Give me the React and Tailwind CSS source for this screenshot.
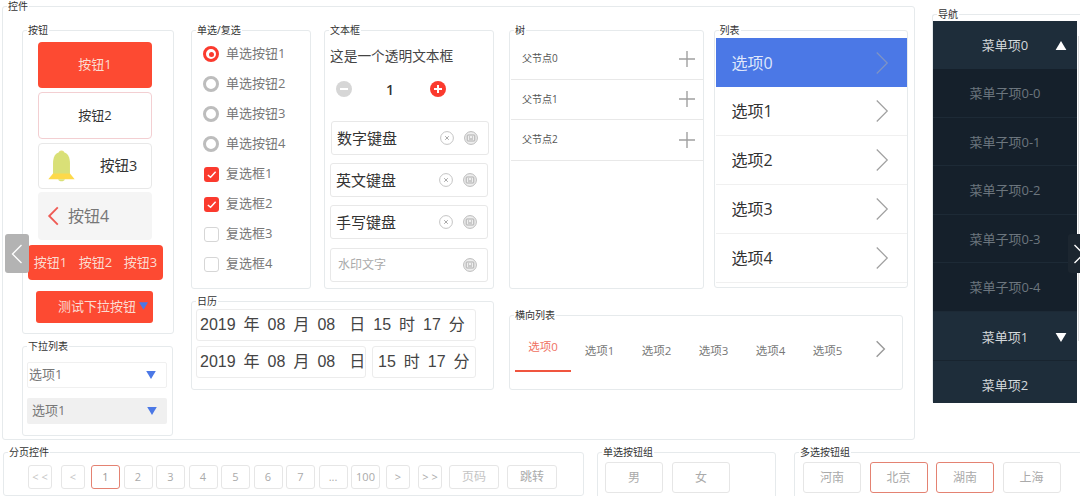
import React from "react";

const Group = ({ label, className = "", children }) => (
  <div className={`relative rounded-[3px] border border-[#e6eaec] bg-white ${className}`}>
    <span className="absolute -top-[8px] left-[4px] bg-white px-[1px] text-[10px] leading-[14px] text-[#333]">{label}</span>
    {children}
  </div>
);

const Chevron = ({ className = "", color = "#999", w = 1.6 }) => (
  <svg viewBox="0 0 16 28" className={className} fill="none">
    <path d="M2 2 L14 14 L2 26" stroke={color} strokeWidth={w} />
  </svg>
);

const Tri = ({ up, color = "#4b78e6", className = "" }) => (
  <svg viewBox="0 0 12 10" className={className}>
    <path d={up ? "M6 0 L12 10 L0 10 Z" : "M0 0 L12 0 L6 10 Z"} fill={color} />
  </svg>
);

const Radio = ({ on, children }) => (
  <div className="flex h-[30px] items-center pl-[11px]">
    {on ? (
      <span className="flex h-[16px] w-[16px] items-center justify-center rounded-full border-[3px] border-[#fb3a2e] bg-white">
        <span className="h-[5px] w-[5px] rounded-full bg-[#fb3a2e]" />
      </span>
    ) : (
      <span className="h-[16px] w-[16px] rounded-full border-[3px] border-[#bdbdbd] bg-white" />
    )}
    <span className="ml-[7px] text-[13px] text-[#777]">{children}</span>
  </div>
);

const Check = ({ on, children }) => (
  <div className="flex h-[30px] items-center pl-[12px]">
    {on ? (
      <span className="flex h-[15px] w-[15px] items-center justify-center rounded-[3px] bg-[#fb3a2e]">
        <svg viewBox="0 0 12 12" className="h-[11px] w-[11px]" fill="none">
          <path d="M2 6.5 L5 9 L10.5 3" stroke="#fff" strokeWidth="1.6" />
        </svg>
      </span>
    ) : (
      <span className="h-[15px] w-[15px] rounded-[3px] border border-[#d6d6d6] bg-white" />
    )}
    <span className="ml-[7px] text-[13px] text-[#777]">{children}</span>
  </div>
);

const KeyIcon = () => (
  <svg viewBox="0 0 14 14" className="h-[14px] w-[14px]" fill="none">
    <circle cx="7" cy="7" r="6.4" stroke="#bbb" strokeWidth="1" fill="#eeeeee" />
    <rect x="3.2" y="4" width="7.6" height="6" rx="0.6" stroke="#a6a6a6" strokeWidth="0.9" />
    <path d="M5 6h1M8 6h1M5 8h4" stroke="#a6a6a6" strokeWidth="1" />
  </svg>
);

const ClearIcon = () => (
  <svg viewBox="0 0 14 14" className="h-[14px] w-[14px]" fill="none">
    <circle cx="7" cy="7" r="6.4" stroke="#c4c4c4" strokeWidth="1" />
    <path d="M5.2 5.2 L8.8 8.8 M8.8 5.2 L5.2 8.8" stroke="#aaa" strokeWidth="1" />
  </svg>
);

const Field = ({ children, placeholder, className = "" }) => (
  <div className={`flex h-[34px] w-[158px] items-center rounded-[3px] border border-[#e8e8e8] pr-[10px] ${className}`}>
    {placeholder ? (
      <span className="ml-[7px] flex-1 text-[12px] text-[#aaa]">{placeholder}</span>
    ) : (
      <>
        <span className="ml-[5px] flex-1 text-[15px] text-[#333]">{children}</span>
        <span className="mr-[10px] flex"><ClearIcon /></span>
      </>
    )}
    <KeyIcon />
  </div>
);

const Bell = () => (
  <svg viewBox="0 0 30 34" className="h-[32px] w-[29px]">
    <circle cx="15" cy="3.5" r="3" fill="#e2e07a" />
    <path d="M15 2 C8 2 6 8 6 14 L6 26 L24 26 L24 14 C24 8 22 2 15 2 Z" fill="#d9e077" />
    <path d="M1 31 L6 25 L24 25 L29 31 Z" fill="#fdd94a" />
    <path d="M11.5 31 H18.5 C18 34 12 34 11.5 31 Z" fill="#d9e077" />
  </svg>
);

const CalSeg = ({ items }) => (
  <div className="flex items-center gap-[8px] font-['Liberation_Sans','Noto_Sans_CJK_SC',sans-serif] text-[16px] text-[#444]">
    {items.map((t, i) => (
      <span key={i} className={t === "日" ? "ml-[6px]" : ""}>{t}</span>
    ))}
  </div>
);

const Pg = ({ children, w = "w-[29px]", red, muted, className = "" }) => (
  <div
    className={`flex h-[24px] ${w} items-center justify-center rounded-[3px] border text-[11px] ${
      red ? "border-[#e48272] text-[#999]" : "border-[#e6e6e6] text-[#aaa]"
    } ${muted ? "text-[#c4c4c4]" : ""} ${className}`}
  >
    {children}
  </div>
);

const Choice = ({ children, red, className = "" }) => (
  <div
    className={`flex h-[31px] w-[58px] items-center justify-center rounded-[3px] border text-[12px] text-[#aaa] ${
      red ? "border-[#e48272]" : "border-[#e6e6e6]"
    } ${className}`}
  >
    {children}
  </div>
);

const subs = ["菜单子项0-0", "菜单子项0-1", "菜单子项0-2", "菜单子项0-3", "菜单子项0-4"];

export default function App() {
  return (
    <div className="relative h-[496px] w-[1080px] overflow-hidden bg-white font-['Open_Sans','Noto_Sans_CJK_SC',sans-serif]">
      <div className="flex h-[440px] pl-[2px] pt-[6px]">
        {/* 控件 */}
        <Group label="控件" className="flex h-[434px] w-[913px] shrink-0 pl-[19px] pt-[23px]">
          {/* column 1 */}
          <div className="flex w-[152px] flex-col">
            <Group label="按钮" className="h-[304px] w-[152px]">
              <div className="flex flex-col pl-[15px] pt-[11px]">
                <div className="flex h-[46px] w-[114px] items-center justify-center rounded-[4px] bg-[#fd4a32] text-[13px] text-[#fbdcd2]">按钮1</div>
                <div className="mt-[4px] flex h-[47px] w-[114px] items-center justify-center rounded-[4px] border border-[#f3cfd2] text-[13px] text-[#333]">按钮2</div>
                <div className="mt-[4px] flex h-[46px] w-[114px] items-center rounded-[4px] border border-[#e8e8e8] pl-[8px]">
                  <Bell />
                  <span className="ml-[24px] text-[14.5px] text-[#333]">按钮3</span>
                </div>
                <div className="mt-[3px] flex h-[48px] w-[114px] items-center rounded-[4px] bg-[#f5f5f5] pl-[9px]">
                  <Chevron className="h-[20px] w-[13px] rotate-180" color="#ef5b55" w={2.6} />
                  <span className="ml-[8px] text-[16px] text-[#777]">按钮4</span>
                </div>
              </div>
              <div className="ml-[5px] mt-[5px] flex h-[35px] w-[135px] items-center justify-around rounded-[4px] bg-[#fd4a32] text-[13px] text-[#fbdcd2]">
                <span>按钮1</span>
                <span>按钮2</span>
                <span>按钮3</span>
              </div>
              <div className="ml-[13px] mt-[11px] flex h-[32px] w-[117px] items-center rounded-[3px] bg-[#fd4a32] pl-[22px] text-[13px] text-[#fbdcd2]">
                <span>测试下拉按钮</span>
                <Tri className="ml-[3px] h-[8px] w-[9px] -translate-y-[1px]" />
              </div>
            </Group>
            <Group label="下拉列表" className="mt-[12px] h-[90px] w-[151px]">
              <div className="ml-[4px] mt-[15px] flex h-[26px] w-[140px] items-center justify-between rounded-[2px] border border-[#f0f0f0] pl-[1px] pr-[10px] text-[13px] text-[#777]">
                <span>选项1</span>
                <Tri className="h-[8px] w-[10px]" />
              </div>
              <div className="ml-[4px] mt-[10px] flex h-[26px] w-[140px] items-center justify-between rounded-[2px] bg-[#f0f0f0] pl-[5px] pr-[10px] text-[13px] text-[#777]">
                <span>选项1</span>
                <Tri className="h-[8px] w-[10px]" />
              </div>
            </Group>
          </div>

          {/* column 2 */}
          <div className="ml-[17px] flex w-[303px] flex-col">
            <div className="flex h-[259px] gap-[13px]">
              <Group label="单选/复选" className="w-[120px] pt-[8px]">
                <Radio on>单选按钮1</Radio>
                <Radio>单选按钮2</Radio>
                <Radio>单选按钮3</Radio>
                <Radio>单选按钮4</Radio>
                <Check on>复选框1</Check>
                <Check on>复选框2</Check>
                <Check>复选框3</Check>
                <Check>复选框4</Check>
              </Group>
              <Group label="文本框" className="w-[170px] pl-[5px]">
                <div className="pt-[15px] text-[13.7px] leading-[20px] text-[#444]">这是一个透明文本框</div>
                <div className="mt-[14px] flex h-[18px] items-center pl-[6px]">
                  <span className="flex h-[16px] w-[16px] items-center justify-center rounded-full bg-[#d6d6d6]">
                    <span className="h-[2px] w-[8px] bg-white" />
                  </span>
                  <span className="ml-[30px] w-[16px] text-center text-[14px] font-semibold text-[#333]">1</span>
                  <span className="relative ml-[32px] flex h-[16px] w-[16px] items-center justify-center rounded-full bg-[#fb3a2e]">
                    <span className="h-[2px] w-[8px] bg-white" />
                    <span className="absolute h-[8px] w-[2px] bg-white" />
                  </span>
                </div>
                <Field className="mt-[23px] ml-[1px]">数字键盘</Field>
                <Field className="mt-[8px]">英文键盘</Field>
                <Field className="mt-[8px]">手写键盘</Field>
                <Field className="mt-[9px]" placeholder="水印文字" />
              </Group>
            </div>
            <Group label="日历" className="mt-[12px] h-[89px] w-[303px] pl-[4px] pt-[7px]">
              <div className="flex h-[32px] w-[280px] items-center rounded-[3px] border border-[#ececec] pl-[3px]">
                <CalSeg items={["2019", "年", "08", "月", "08", "日", "15", "时", "17", "分"]} />
              </div>
              <div className="mt-[5px] flex gap-[6px]">
                <div className="flex h-[32px] w-[170px] items-center rounded-[3px] border border-[#ececec] pl-[3px]">
                  <CalSeg items={["2019", "年", "08", "月", "08", "日"]} />
                </div>
                <div className="flex h-[32px] w-[104px] items-center rounded-[3px] border border-[#ececec] pl-[5px]">
                  <CalSeg items={["15", "时", "17", "分"]} />
                </div>
              </div>
            </Group>
          </div>

          {/* column 3 */}
          <div className="ml-[15px] flex w-[399px] flex-col">
            <div className="flex h-[259px] gap-[10px]">
              <Group label="树" className="w-[195px] pl-[1px] pt-[8px]">
                {["父节点0", "父节点1", "父节点2"].map((t) => (
                  <div key={t} className="flex h-[40.5px] items-center justify-between border-b border-[#e8e8e8] pl-[11px] pr-[8px]">
                    <span className="text-[10px] text-[#555]">{t}</span>
                    <svg viewBox="0 0 16 16" className="h-[16px] w-[16px]" fill="none">
                      <path d="M8 0V16M0 8H16" stroke="#a0a0a0" strokeWidth="1.4" />
                    </svg>
                  </div>
                ))}
              </Group>
              <Group label="列表" className="h-[258px] w-[195px] pl-[1px] pt-[7px]">
                {[0, 1, 2, 3, 4].map((i) => (
                  <div
                    key={i}
                    className={`flex h-[49px] items-center justify-between pl-[16px] pr-[18px] text-[16px] ${
                      i === 0 ? "bg-[#4b78e6] text-[#dfe7fb]" : "border-b border-[#f0f0f0] text-[#333]"
                    }`}
                  >
                    <span>选项{i}</span>
                    <Chevron className="h-[26px] w-[14px]" color={i === 0 ? "#7f93c4" : "#a0a0a0"} w={1.4} />
                  </div>
                ))}
              </Group>
            </div>
            <Group label="横向列表" className="mt-[26px] flex h-[75px] w-[394px] pl-[5px]">
              <div className="flex h-[56px] w-[56px] items-center justify-center border-b-[2px] border-[#f0553f] pt-[8px] text-[11.5px] text-[#f0705f]">选项0</div>
              {[1, 2, 3, 4, 5].map((i) => (
                <div key={i} className="flex h-[70px] w-[57px] items-center justify-center text-[11.5px] text-[#777]">选项{i}</div>
              ))}
              <Chevron className="ml-[19px] mt-[24px] h-[18px] w-[11px]" color="#999" w={2.2} />
            </Group>
          </div>
        </Group>

        {/* 导航 */}
        <div className="ml-[17px] mt-[8px] h-[389px] w-[160px] shrink-0">
          <Group label="导航" className="h-[389px] w-[160px] border-b-0 border-r-0 pt-[6px]">
            <div className="flex h-[382px] w-[144px] flex-col bg-[#15202b]">
              <div className="relative flex h-[48px] items-center justify-center bg-[#1e2d3a] pt-[2px] text-[13px] text-[#d4d8db]">
                菜单项0
                <Tri up color="#fff" className="absolute right-[10px] top-[20px] h-[9px] w-[12px]" />
              </div>
              {subs.map((t) => (
                <div key={t} className="flex h-[48.6px] shrink-0 items-center justify-center border-b border-[#1d2a36] pt-[2px] text-[13px] text-[#6c767e]">{t}</div>
              ))}
              <div className="relative flex h-[49px] shrink-0 items-center justify-center border-b border-[#18242f] bg-[#1e2d3a] pt-[3px] text-[13px] text-[#d4d8db]">
                菜单项1
                <Tri color="#fff" className="absolute right-[10px] top-[21px] h-[9px] w-[12px]" />
              </div>
              <div className="flex flex-1 items-center justify-center bg-[#1e2d3a] pt-[7px] text-[13px] text-[#d4d8db]">菜单项2</div>
            </div>
          </Group>
        </div>
      </div>

      {/* bottom row */}
      <div className="mt-[12px] flex pl-[3px]">
        <Group label="分页控件" className="h-[44px] w-[581px] shrink-0 pl-[24px] pt-[12px]">
          <div className="flex items-center">
            <Pg w="w-[24px]" muted>{"< <"}</Pg>
            <Pg w="w-[24px]" muted className="ml-[9px]">{"<"}</Pg>
            <Pg red className="ml-[6px]">1</Pg>
            {["2", "3", "4", "5", "6", "7", "...", "100"].map((t) => (
              <Pg key={t} className="ml-[3.5px]">{t}</Pg>
            ))}
            <Pg w="w-[24px]" className="ml-[6px]">{">"}</Pg>
            <Pg w="w-[24px]" className="ml-[8px]">{"> >"}</Pg>
            <Pg w="w-[50px]" muted className="ml-[7px] text-[12px]">页码</Pg>
            <Pg w="w-[50px]" className="ml-[8px] text-[12px]">跳转</Pg>
          </div>
        </Group>
        <Group label="单选按钮组" className="ml-[13px] h-[60px] w-[179px] shrink-0 pl-[7px] pt-[9px]">
          <div className="flex gap-[9px]">
            <Choice>男</Choice>
            <Choice>女</Choice>
          </div>
        </Group>
        <Group label="多选按钮组" className="ml-[18px] h-[60px] w-[300px] shrink-0 pl-[8px] pt-[9px]">
          <div className="flex gap-[8.5px]">
            <Choice>河南</Choice>
            <Choice red>北京</Choice>
            <Choice red>湖南</Choice>
            <Choice>上海</Choice>
          </div>
        </Group>
      </div>

      {/* overlays */}
      <div className="absolute left-[1078px] top-[36px] h-[305px] w-px bg-[#dcdcdc]" />
      <div className="absolute left-[5px] top-[234px] flex h-[39px] w-[24px] items-center justify-center rounded-[3px] bg-[#b3b3b3]">
        <Chevron className="h-[22px] w-[12px] rotate-180" color="#fff" w={1.8} />
      </div>
      <div className="absolute left-[1068px] top-[234px] flex h-[39px] w-[24px] items-center rounded-[3px] bg-[#1c2630] pl-[5px]">
        <Chevron className="h-[22px] w-[12px]" color="#fff" w={1.8} />
      </div>
    </div>
  );
}
